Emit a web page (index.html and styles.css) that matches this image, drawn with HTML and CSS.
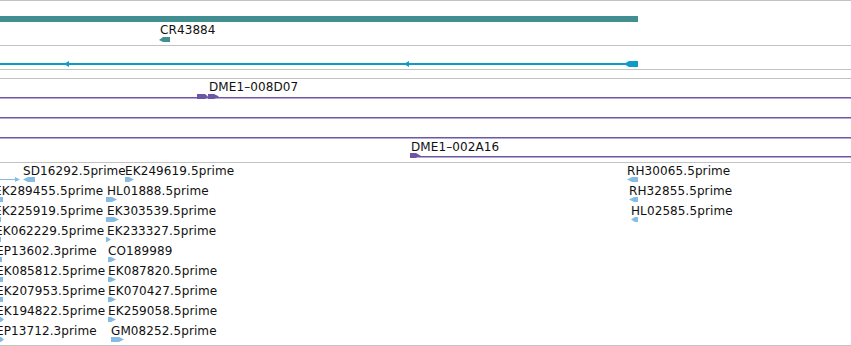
FILE: index.html
```html
<!DOCTYPE html>
<html>
<head>
<meta charset="utf-8">
<link rel="stylesheet" href="styles.css">
</head>
<body>
<div class="view">
  <div class="track t1">
    <svg class="glyphs" width="851" height="44">
      <rect x="0" y="15" width="638" height="6" fill="#418f92"/>
      <polygon points="159,39 163,36 170,36 170,41 163,41" fill="#418f92"/>
    </svg>
    <div class="label" style="left:160px;top:22px">CR43884</div>
  </div>
  <div class="track t2">
    <svg class="glyphs" width="851" height="23">
      <rect x="0" y="17" width="630" height="2" fill="#0d9dc4"/>
      <polygon points="64,18 69,15 69,21" fill="#0d9dc4"/>
      <polygon points="404,18 409,15 409,21" fill="#0d9dc4"/>
      <polygon points="624,18 629,15 638,15 638,21 629,21" fill="#0d9dc4"/>
    </svg>
  </div>
  <div class="track t3"></div>
  <div class="track t4">
    <svg class="glyphs" width="851" height="83">
      <rect x="0" y="18" width="851" height="1.5" fill="#6d56a6"/>
      <rect x="0" y="38" width="851" height="1.5" fill="#6d56a6"/>
      <rect x="0" y="58" width="851" height="1.5" fill="#6d56a6"/>
      <polygon points="197,15 205,15 208,17.5 205,20 197,20" fill="#6d56a6"/>
      <polygon points="208,15 214,15 219,17.5 214,20 208,20" fill="#6d56a6"/>
      <rect x="418" y="77" width="433" height="1.5" fill="#6d56a6"/>
      <polygon points="410,74 416,74 421,77 416,79 410,79" fill="#6d56a6"/>
    </svg>
    <div class="label" style="left:209px;top:1px">DME1&#8211;008D07</div>
    <div class="label" style="left:411px;top:61px">DME1&#8211;002A16</div>
  </div>
  <div class="track t5">
    <svg class="glyphs" width="851" height="182">
      <g fill="#86bbe4">
        <rect x="0" y="16" width="15" height="1"/>
        <polygon points="15,14 20,16.5 15,19"/>
        <polygon points="23,16.5 28,14 35,14 35,19 28,19"/>
        <polygon points="125,14 129,14 134,16.5 129,19 125,19"/>
        <rect x="0" y="34" width="3" height="5"/>
        <polygon points="106,34 112,34 117,36.5 112,39 106,39"/>
        <rect x="0" y="54" width="1" height="5"/>
        <polygon points="106,54 114,54 119,56.5 114,59 106,59"/>
        <rect x="0" y="74" width="1" height="5"/>
        <polygon points="106,74 107,74 111,76.5 107,79 106,79"/>
        <rect x="0" y="94" width="2" height="5"/>
        <polygon points="108,94 111,94 116,96.5 111,99 108,99"/>
        <rect x="0" y="114" width="3" height="5"/>
        <polygon points="108,114 111,114 116,116.5 111,119 108,119"/>
        <rect x="0" y="134" width="3" height="5"/>
        <polygon points="108,134 111,134 116,136.5 111,139 108,139"/>
        <polygon points="0,154 1,154 4,156.5 1,159 0,159"/>
        <polygon points="108,154 111,154 116,156.5 111,159 108,159"/>
        <polygon points="0,174 1,174 4,176.5 1,179 0,179"/>
        <polygon points="111,174 119,174 124,176.5 119,179 111,179"/>
        <polygon points="627,16.5 632,14 638,14 638,19 632,19"/>
        <polygon points="629,36.5 634,34 638,34 638,39 634,39"/>
        <polygon points="631,56.5 635,54 638,54 638,59 635,59"/>
      </g>
    </svg>
    <div class="label" style="left:23px;top:1px">SD16292.5prime</div>
    <div class="label" style="left:125px;top:1px">EK249619.5prime</div>
    <div class="label" style="left:-6px;top:21px">EK289455.5prime</div>
    <div class="label" style="left:107px;top:21px">HL01888.5prime</div>
    <div class="label" style="left:-6px;top:41px">EK225919.5prime</div>
    <div class="label" style="left:107px;top:41px">EK303539.5prime</div>
    <div class="label" style="left:-5px;top:61px">EK062229.5prime</div>
    <div class="label" style="left:107px;top:61px">EK233327.5prime</div>
    <div class="label" style="left:-4px;top:81px">EP13602.3prime</div>
    <div class="label" style="left:108px;top:81px">CO189989</div>
    <div class="label" style="left:-4px;top:101px">EK085812.5prime</div>
    <div class="label" style="left:108px;top:101px">EK087820.5prime</div>
    <div class="label" style="left:-4px;top:121px">EK207953.5prime</div>
    <div class="label" style="left:108px;top:121px">EK070427.5prime</div>
    <div class="label" style="left:-4px;top:141px">EK194822.5prime</div>
    <div class="label" style="left:108px;top:141px">EK259058.5prime</div>
    <div class="label" style="left:-4px;top:161px">EP13712.3prime</div>
    <div class="label" style="left:111px;top:161px">GM08252.5prime</div>
    <div class="label" style="left:627px;top:1px">RH30065.5prime</div>
    <div class="label" style="left:629px;top:21px">RH32855.5prime</div>
    <div class="label" style="left:631px;top:41px">HL02585.5prime</div>
  </div>
</div>
</body>
</html>
```

FILE: styles.css
```css
html, body {
  margin: 0;
  padding: 0;
  background: #ffffff;
}
body {
  width: 851px;
  height: 346px;
  overflow: hidden;
  font-family: "DejaVu Sans", sans-serif;
  font-size: 12px;
  letter-spacing: 0.1px;
  color: #111;
}
.view {
  display: flex;
  flex-direction: column;
  width: 851px;
}
.track {
  position: relative;
  border-top: 1px solid #c2c2c2;
  overflow: hidden;
}
.t1 { height: 44px; }
.t2 { height: 23px; }
.t3 { height: 8px; }
.t4 { height: 83px; }
.t5 { height: 182px; border-bottom: 1px solid #c2c2c2; }
.glyphs {
  position: absolute;
  left: 0;
  top: 0;
  display: block;
}
.label {
  position: absolute;
  white-space: nowrap;
  line-height: 14px;
}
```
